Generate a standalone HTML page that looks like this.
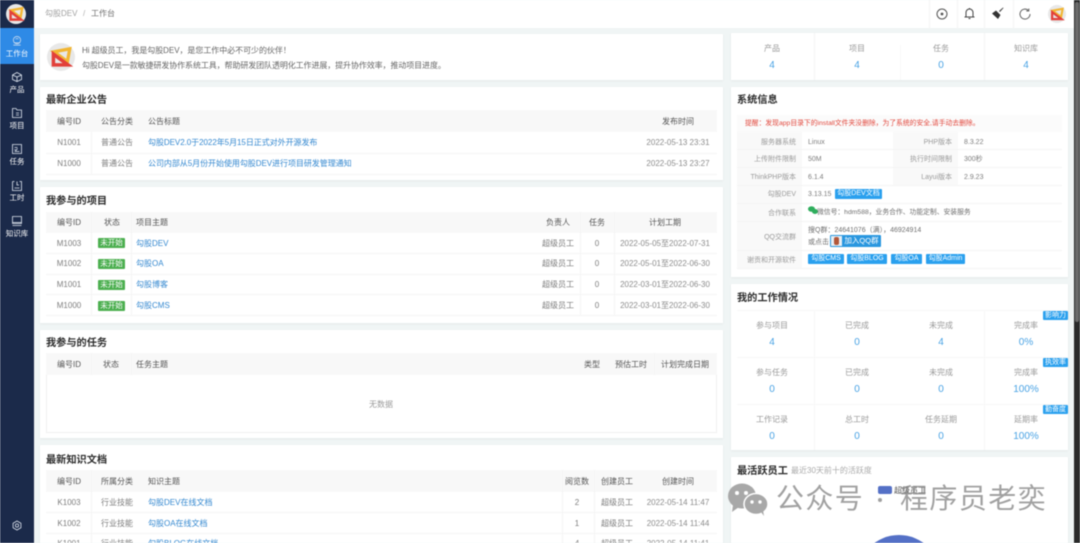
<!DOCTYPE html>
<html lang="zh"><head><meta charset="utf-8"><title>勾股DEV</title>
<style>
*{box-sizing:border-box}
html,body{margin:0;padding:0;width:1080px;height:543px;overflow:hidden;background:#f0f5f5}
body{position:relative;font-family:"Liberation Sans","Noto Sans CJK SC",sans-serif;font-size:8px;color:#7e7e7e}
#w{position:absolute;left:0;top:0;width:1080px;height:543px;filter:blur(.5px);overflow:hidden}
.a,.t,.c,.r{position:absolute}
.t,.c,.r{white-space:nowrap;line-height:12px;height:12px;margin-top:-5px}
.c{transform:translateX(-50%)}
.r{transform:translateX(-100%)}
.card{position:absolute;background:#fff;box-shadow:0 1px 3px rgba(0,0,0,.05)}
.t.h{font-size:10.2px;font-weight:700;color:#2b2b2b;line-height:14px;height:14px;margin-top:-5px}
.th{color:#555}
.l{color:#3488d0}
.d{color:#8c8c8c}
.hd{position:absolute;left:46px;width:671px;background:#f8f8f8;height:22px}
.hl{position:absolute;height:1px;background:#f4f4f4}
.vl{position:absolute;width:1px;background:#f4f4f4}
.g{position:absolute;width:27px;height:10px;line-height:10px;background:#4caf50;color:#fff;text-align:center;font-size:7.5px;left:98px;border-radius:1px}
.tag{position:absolute;background:#2aa0ee;color:#fff;text-align:center;height:10px;line-height:10px;font-size:7px;border-radius:1px;white-space:nowrap}
.bt{position:absolute;background:#2aa0ee;color:#fff;text-align:center;height:9px;line-height:9px;font-size:7px;left:1043px;width:25px;border-radius:1px}
.c.n{color:#4aa3e4;font-size:10px;margin-top:-4px}
.lb{color:#9a9a9a}
.t.s,.r.s{font-size:7px;margin-top:-4.5px}
.m{color:#fff;font-size:7.5px}
svg{position:absolute;overflow:visible}
.ic{fill:none;stroke:#dfe6f0;stroke-width:.8}
.wm{position:absolute;left:776px;top:482px;font-size:28px;line-height:34px;letter-spacing:1.4px;color:rgba(130,130,130,.75);white-space:nowrap}
</style></head><body>
<svg width="0" height="0" style="position:absolute"><defs>
<symbol id="logo" viewBox="0 0 24 24"><circle cx="12" cy="12" r="12" fill="#e8e8e8"/>
<path d="M6 7.500 19.500 5 17.500 16Z" fill="none" stroke="#f2b632" stroke-width="2.800"/>
<path d="M5.500 9.500V18.800H18Z" fill="none" stroke="#e2403a" stroke-width="3"/></symbol>
</defs></svg>
<div id="w">
<!-- sidebar -->
<div class="a" style="left:0;top:0;width:34px;height:543px;background:#1b2a4a"></div>
<div class="a" style="left:0;top:28px;width:34px;height:36px;background:#2e8ae6"></div>
<svg style="left:6px;top:4px" width="20" height="20"><use href="#logo" width="20" height="20"/></svg>
<svg class="ic" style="left:12px;top:36px" width="10" height="10" viewBox="0 0 11 11"><circle cx="5.500" cy="4.500" r="4"/><path d="M2 7.500h7M1.500 10h8M4 3.500a2 2 0 0 1 3 0"/></svg>
<div class="c m" style="left:17px;top:53px">工作台</div>
<svg class="ic" style="left:12px;top:72px" width="10" height="10" viewBox="0 0 10 10"><path d="M5 .5 9.500 3v4.500L5 9.500.5 7.500V3ZM.5 3 5 5l4.500-2M5 5v4.500"/></svg>
<div class="c m" style="left:17px;top:89px">产品</div>
<svg class="ic" style="left:12px;top:108px" width="10" height="10" viewBox="0 0 10 10"><path d="M.5.5h3.500l1 1.500h4.500v7.500H.5ZM4 5h3M4 7h3"/></svg>
<div class="c m" style="left:17px;top:125px">项目</div>
<svg class="ic" style="left:12px;top:144px" width="10" height="10" viewBox="0 0 10 10"><path d="M.5.5h9v9h-9ZM2.500 3.500h3M2.500 5.500l1.500 1 1.500-2M2.500 7.500h5"/></svg>
<div class="c m" style="left:17px;top:161px">任务</div>
<svg class="ic" style="left:12px;top:181px" width="10" height="10" viewBox="0 0 10 10"><path d="M.5.5h2M7.500.5h2v9h-9V.5M5 .5v3.500h2M2.500 7h5"/></svg>
<div class="c m" style="left:17px;top:197px">工时</div>
<svg class="ic" style="left:12px;top:216px" width="10" height="10" viewBox="0 0 10 10"><path d="M.5.5h9v7h-9ZM.5 9.500h9M.5 6.500h9"/></svg>
<div class="c m" style="left:17px;top:233px">知识库</div>
<svg class="ic" style="left:12px;top:520px" width="10" height="11" viewBox="0 0 10 10"><circle cx="5" cy="5" r="1.600"/><path d="M5 .5 8.900 2.750v4.500L5 9.500 1.100 7.250v-4.500Z"/></svg>

<!-- topbar -->
<div class="a" style="left:34px;top:0;width:1041px;height:28px;background:#fff"></div>
<div class="t" style="left:45px;top:13px;color:#a0a0a0">勾股DEV</div>
<div class="t" style="left:83px;top:13px;color:#b0b0b0">/</div>
<div class="t" style="left:91px;top:13px;color:#707070">工作台</div>
<div class="vl" style="left:929px;top:0;height:28px"></div>
<div class="vl" style="left:957px;top:0;height:28px"></div>
<div class="vl" style="left:984px;top:0;height:28px"></div>
<div class="vl" style="left:1013px;top:0;height:28px"></div>
<svg style="left:936px;top:8px" width="12" height="12" viewBox="0 0 12 12" fill="none" stroke="#555"><circle cx="6" cy="6" r="5"/><circle cx="6" cy="6" r="1.400" fill="#555" stroke="none"/></svg>
<svg style="left:964px;top:7px" width="11" height="13" viewBox="0 0 11 13" fill="none" stroke="#444"><path d="M.5 10h10M2 10V5.500a3.500 3.500 0 0 1 7 0V10M4.500 11.500h2M5.500 1v1"/></svg>
<svg style="left:991px;top:7px" width="13" height="13" viewBox="0 0 13 13"><path d="M8 4 12 .5l.5.5L9 5Z" fill="#444"/><path d="M5 3.500 9.500 8 7 12 1 6.500Z" fill="#333"/></svg>
<svg style="left:1019px;top:8px" width="12" height="12" viewBox="0 0 12 12" fill="none" stroke="#666"><path d="M9.500 2.500A5 5 0 1 0 11 6M9.800.5v2.500H7.300"/></svg>
<svg style="left:1048px;top:5px" width="18" height="18"><use href="#logo" width="18" height="18"/></svg>

<!-- left cards -->
<div class="card" style="left:40px;top:34px;width:683px;height:46px"></div>
<svg style="left:47px;top:43px" width="28" height="28"><use href="#logo" width="28" height="28"/></svg>
<div class="t" style="left:82px;top:50px;color:#666;letter-spacing:-.05px">Hi 超级员工，我是勾股DEV，是您工作中必不可少的伙伴！</div>
<div class="t" style="left:82px;top:65px;color:#666;letter-spacing:-.1px">勾股DEV是一款敏捷研发协作系统工具，帮助研发团队透明化工作进展，提升协作效率，推动项目进度。</div>

<!-- announcements -->
<div class="card" style="left:40px;top:87px;width:683px;height:93px"></div>
<div class="t h" style="left:46px;top:99px">最新企业公告</div>
<div class="hd" style="top:110px"></div>
<div class="vl" style="left:91px;top:132px;height:42px"></div>
<div class="hl" style="left:46px;top:153px;width:671px"></div>
<div class="hl" style="left:46px;top:174px;width:671px"></div>
<div class="c th" style="left:69px;top:121px">编号ID</div><div class="c th" style="left:117px;top:121px">公告分类</div><div class="t th" style="left:148px;top:121px">公告标题</div><div class="c th" style="left:678px;top:121px">发布时间</div>
<div class="c" style="left:69px;top:142px">N1001</div><div class="c" style="left:117px;top:142px">普通公告</div><div class="t l" style="left:148px;top:142px;letter-spacing:-.05px">勾股DEV2.0于2022年5月15日正式对外开源发布</div><div class="c d" style="left:678px;top:142px">2022-05-13 23:31</div>
<div class="c" style="left:69px;top:163px">N1000</div><div class="c" style="left:117px;top:163px">普通公告</div><div class="t l" style="left:148px;top:163px;letter-spacing:-.05px">公司内部从5月份开始使用勾股DEV进行项目研发管理通知</div><div class="c d" style="left:678px;top:163px">2022-05-13 23:27</div>

<!-- projects -->
<div class="card" style="left:40px;top:187px;width:683px;height:136px"></div>
<div class="t h" style="left:46px;top:200px">我参与的项目</div>
<div class="hd" style="top:212px;height:21px"></div>
<div class="vl" style="left:91px;top:212px;height:103px"></div><div class="vl" style="left:131px;top:212px;height:103px"></div><div class="vl" style="left:580px;top:212px;height:103px"></div><div class="vl" style="left:614px;top:212px;height:103px"></div>
<div class="hl" style="left:46px;top:253px;width:671px"></div><div class="hl" style="left:46px;top:274px;width:671px"></div><div class="hl" style="left:46px;top:294px;width:671px"></div><div class="hl" style="left:46px;top:315px;width:671px"></div>
<div class="c th" style="left:69px;top:222px">编号ID</div><div class="c th" style="left:112px;top:222px">状态</div><div class="t th" style="left:136px;top:222px">项目主题</div><div class="c th" style="left:558px;top:222px">负责人</div><div class="c th" style="left:597px;top:222px">任务</div><div class="c th" style="left:665px;top:222px">计划工期</div>
<div class="c" style="left:69px;top:243px">M1003</div><div class="g" style="top:238px">未开始</div><div class="t l" style="left:136px;top:243px">勾股DEV</div><div class="c" style="left:558px;top:243px">超级员工</div><div class="c" style="left:597px;top:243px">0</div><div class="c d" style="left:665px;top:243px">2022-05-05至2022-07-31</div>
<div class="c" style="left:69px;top:263px">M1002</div><div class="g" style="top:259px">未开始</div><div class="t l" style="left:136px;top:263px">勾股OA</div><div class="c" style="left:558px;top:263px">超级员工</div><div class="c" style="left:597px;top:263px">0</div><div class="c d" style="left:665px;top:263px">2022-05-01至2022-06-30</div>
<div class="c" style="left:69px;top:284px">M1001</div><div class="g" style="top:280px">未开始</div><div class="t l" style="left:136px;top:284px">勾股博客</div><div class="c" style="left:558px;top:284px">超级员工</div><div class="c" style="left:597px;top:284px">0</div><div class="c d" style="left:665px;top:284px">2022-03-01至2022-06-30</div>
<div class="c" style="left:69px;top:305px">M1000</div><div class="g" style="top:301px">未开始</div><div class="t l" style="left:136px;top:305px">勾股CMS</div><div class="c" style="left:558px;top:305px">超级员工</div><div class="c" style="left:597px;top:305px">0</div><div class="c d" style="left:665px;top:305px">2022-03-01至2022-06-30</div>

<!-- tasks -->
<div class="card" style="left:40px;top:330px;width:683px;height:108px"></div>
<div class="t h" style="left:46px;top:342px">我参与的任务</div>
<div class="hd" style="top:353px"></div>
<div class="a" style="left:46px;top:375px;width:671px;height:58px;border:1px solid #f0f0f0;border-top:0"></div>
<div class="vl" style="left:91px;top:353px;height:22px"></div><div class="vl" style="left:131px;top:353px;height:22px"></div><div class="vl" style="left:654px;top:353px;height:22px"></div>
<div class="c th" style="left:69px;top:364px">编号ID</div><div class="c th" style="left:111px;top:364px">状态</div><div class="t th" style="left:136px;top:364px">任务主题</div><div class="c th" style="left:592px;top:364px">类型</div><div class="c th" style="left:631px;top:364px">预估工时</div><div class="c th" style="left:685px;top:364px">计划完成日期</div>
<div class="c lb" style="left:381px;top:404px">无数据</div>

<!-- docs -->
<div class="card" style="left:40px;top:445px;width:683px;height:98px"></div>
<div class="t h" style="left:46px;top:459px">最新知识文档</div>
<div class="hd" style="top:470px"></div>
<div class="vl" style="left:91px;top:470px;height:73px"></div><div class="vl" style="left:562px;top:470px;height:73px"></div><div class="vl" style="left:594px;top:470px;height:73px"></div>
<div class="hl" style="left:46px;top:512px;width:671px"></div><div class="hl" style="left:46px;top:533px;width:671px"></div>
<div class="c th" style="left:69px;top:481px">编号ID</div><div class="c th" style="left:117px;top:481px">所属分类</div><div class="t th" style="left:148px;top:481px">知识主题</div><div class="c th" style="left:577px;top:481px">阅览数</div><div class="c th" style="left:617px;top:481px">创建员工</div><div class="c th" style="left:678px;top:481px">创建时间</div>
<div class="c" style="left:69px;top:502px">K1003</div><div class="c" style="left:117px;top:502px">行业技能</div><div class="t l" style="left:148px;top:502px">勾股DEV在线文档</div><div class="c" style="left:577px;top:502px">2</div><div class="c" style="left:617px;top:502px">超级员工</div><div class="c d" style="left:678px;top:502px">2022-05-14 11:47</div>
<div class="c" style="left:69px;top:523px">K1002</div><div class="c" style="left:117px;top:523px">行业技能</div><div class="t l" style="left:148px;top:523px">勾股OA在线文档</div><div class="c" style="left:577px;top:523px">1</div><div class="c" style="left:617px;top:523px">超级员工</div><div class="c d" style="left:678px;top:523px">2022-05-14 11:44</div>
<div class="c" style="left:69px;top:543px">K1001</div><div class="c" style="left:117px;top:543px">行业技能</div><div class="t l" style="left:148px;top:543px">勾股BLOG在线文档</div><div class="c" style="left:577px;top:543px">4</div><div class="c" style="left:617px;top:543px">超级员工</div><div class="c d" style="left:678px;top:543px">2022-05-14 11:41</div>

<!-- right stats -->
<div class="card" style="left:731px;top:33px;width:337px;height:47px"></div>
<div class="vl" style="left:814px;top:33px;height:47px"></div><div class="vl" style="left:900px;top:45px;height:35px;background:#f8f8f8"></div><div class="vl" style="left:984px;top:33px;height:47px"></div>
<div class="c lb" style="left:772px;top:48px">产品</div><div class="c n" style="left:772px;top:64px">4</div>
<div class="c lb" style="left:857px;top:48px">项目</div><div class="c n" style="left:857px;top:64px">4</div>
<div class="c lb" style="left:941px;top:48px">任务</div><div class="c n" style="left:941px;top:64px">0</div>
<div class="c lb" style="left:1026px;top:48px">知识库</div><div class="c n" style="left:1026px;top:64px">4</div>

<!-- system -->
<div class="card" style="left:731px;top:87px;width:337px;height:190px"></div>
<div class="t h" style="left:737px;top:99px">系统信息</div>
<div class="a" style="left:737px;top:115px;width:325px;height:17px;background:#fbfbfb"></div>
<div class="t" style="left:745px;top:123px;color:#e2483d;font-size:6.8px">提醒：发现app目录下的install文件夹没删除，为了系统的安全,请手动去删除。</div>
<div class="a" style="left:737px;top:132px;width:65px;height:136px;background:#f9f9f9"></div>
<div class="a" style="left:893px;top:132px;width:65px;height:53px;background:#f9f9f9"></div>
<div class="hl" style="left:737px;top:149px;width:325px"></div><div class="hl" style="left:737px;top:167px;width:325px"></div><div class="hl" style="left:737px;top:185px;width:325px"></div><div class="hl" style="left:737px;top:203px;width:325px"></div><div class="hl" style="left:737px;top:221px;width:325px"></div><div class="hl" style="left:737px;top:250px;width:325px"></div><div class="hl" style="left:737px;top:268px;width:325px"></div>
<div class="r lb s" style="left:796px;top:141px">服务器系统</div><div class="t s" style="left:808px;top:141px">Linux</div><div class="r lb s" style="left:952px;top:141px">PHP版本</div><div class="t s" style="left:964px;top:141px">8.3.22</div>
<div class="r lb s" style="left:796px;top:158px">上传附件限制</div><div class="t s" style="left:808px;top:158px">50M</div><div class="r lb s" style="left:952px;top:158px">执行时间限制</div><div class="t s" style="left:964px;top:158px">300秒</div>
<div class="r lb s" style="left:796px;top:176px">ThinkPHP版本</div><div class="t s" style="left:808px;top:176px">6.1.4</div><div class="r lb s" style="left:952px;top:176px">Layui版本</div><div class="t s" style="left:964px;top:176px">2.9.23</div>
<div class="r lb s" style="left:796px;top:193px">勾股DEV</div><div class="t s" style="left:808px;top:193px">3.13.15</div><div class="tag" style="left:835px;top:189px;width:47px">勾股DEV文档</div>
<div class="r lb s" style="left:796px;top:212px">合作联系</div>
<svg style="left:808px;top:206px" width="10" height="9" viewBox="0 0 10 9"><ellipse cx="3.500" cy="3" rx="3.500" ry="2.800" fill="#2fae5d"/><ellipse cx="7" cy="5.500" rx="3" ry="2.500" fill="#2fae5d"/></svg>
<div class="t" style="left:817px;top:212px;color:#707070;font-size:6.8px">微信号：hdm588，业务合作、功能定制、安装服务</div>
<div class="r lb s" style="left:796px;top:236px">QQ交流群</div>
<div class="t s" style="left:808px;top:229px;color:#707070">搜Q群：24641076（满），46924914</div>
<div class="t s" style="left:808px;top:241px;color:#707070">或点击</div>
<div class="tag" style="left:830px;top:235px;width:51px;height:12px;line-height:12px;padding-left:12px;background:#2a97df;font-size:7.500px">加入QQ群</div>
<div class="a" style="left:831px;top:236px;width:11px;height:10px;background:#e8eef4"></div>
<div class="a" style="left:834px;top:237px;width:5px;height:8px;background:#b2573a;border-radius:2px"></div>
<div class="r lb s" style="left:796px;top:259px">谢贡和开源软件</div>
<div class="tag" style="left:808px;top:254px;width:36px">勾股CMS</div><div class="tag" style="left:847px;top:254px;width:40px">勾股BLOG</div><div class="tag" style="left:891px;top:254px;width:31px">勾股OA</div><div class="tag" style="left:926px;top:254px;width:39px">勾股Admin</div>

<!-- work -->
<div class="card" style="left:731px;top:284px;width:337px;height:166px"></div>
<div class="t h" style="left:737px;top:297px">我的工作情况</div>
<div class="hl" style="left:737px;top:310px;width:331px;background:#f7f7f7"></div><div class="hl" style="left:737px;top:357px;width:331px;background:#f7f7f7"></div><div class="hl" style="left:737px;top:404px;width:331px;background:#f7f7f7"></div>
<div class="vl" style="left:814px;top:310px;height:140px;background:#f7f7f7"></div><div class="vl" style="left:984px;top:310px;height:140px;background:#f7f7f7"></div>
<div class="bt" style="top:311px">影响力</div><div class="bt" style="top:358px">执效率</div><div class="bt" style="top:405px">勤奋度</div>
<div class="c lb" style="left:772px;top:325px">参与项目</div><div class="c n" style="left:772px;top:341px">4</div><div class="c lb" style="left:857px;top:325px">已完成</div><div class="c n" style="left:857px;top:341px">0</div><div class="c lb" style="left:941px;top:325px">未完成</div><div class="c n" style="left:941px;top:341px">4</div><div class="c lb" style="left:1026px;top:325px">完成率</div><div class="c n" style="left:1026px;top:341px">0%</div>
<div class="c lb" style="left:772px;top:372px">参与任务</div><div class="c n" style="left:772px;top:388px">0</div><div class="c lb" style="left:857px;top:372px">已完成</div><div class="c n" style="left:857px;top:388px">0</div><div class="c lb" style="left:941px;top:372px">未完成</div><div class="c n" style="left:941px;top:388px">0</div><div class="c lb" style="left:1026px;top:372px">完成率</div><div class="c n" style="left:1026px;top:388px">100%</div>
<div class="c lb" style="left:772px;top:419px">工作记录</div><div class="c n" style="left:772px;top:435px">0</div><div class="c lb" style="left:857px;top:419px">总工时</div><div class="c n" style="left:857px;top:435px">0</div><div class="c lb" style="left:941px;top:419px">任务延期</div><div class="c n" style="left:941px;top:435px">0</div><div class="c lb" style="left:1026px;top:419px">延期率</div><div class="c n" style="left:1026px;top:435px">100%</div>

<!-- active -->
<div class="card" style="left:731px;top:457px;width:337px;height:86px"></div>
<div class="t h" style="left:737px;top:470px">最活跃员工</div>
<div class="t" style="left:791px;top:470px;color:#aaa">最近30天前十的活跃度</div>
<div class="a" style="left:878px;top:486px;width:14px;height:8px;background:#5470c6;border-radius:2px"></div>
<div class="t" style="left:894px;top:490px;color:#555">超级员工</div>
<div class="a" style="left:857px;top:535px;width:84px;height:84px;border-radius:50%;background:#5470c6"></div>

<!-- scrollbar -->
<div class="a" style="left:1074px;top:0;width:6px;height:543px;background:#2a2a2a"></div>
<div class="a" style="left:1075px;top:2px;width:4px;height:320px;background:#6b6b6b;border-radius:2px"></div>

<!-- watermark -->
<svg style="left:727px;top:483px" width="42" height="34" viewBox="0 0 42 34">
<ellipse cx="15" cy="13" rx="14" ry="12.500" fill="#a8a8a8"/><path d="M6 22 5 29 12 24Z" fill="#a8a8a8"/>
<ellipse cx="29" cy="21" rx="12" ry="10.500" fill="#a8a8a8" stroke="#fff" stroke-width="1.500"/><path d="M34 29 37 33 36 27Z" fill="#a8a8a8"/>
<circle cx="10" cy="10" r="2" fill="#fff"/><circle cx="19" cy="10" r="2" fill="#fff"/><circle cx="25" cy="19" r="1.700" fill="#fff"/><circle cx="33" cy="19" r="1.700" fill="#fff"/></svg>
<div class="wm">公众号</div>
<div class="a" style="left:878px;top:498px;width:4px;height:4px;border-radius:50%;background:#a0a0a0"></div>
<div class="wm" style="left:900px">程序员老奕</div>
</div>
</body></html>
